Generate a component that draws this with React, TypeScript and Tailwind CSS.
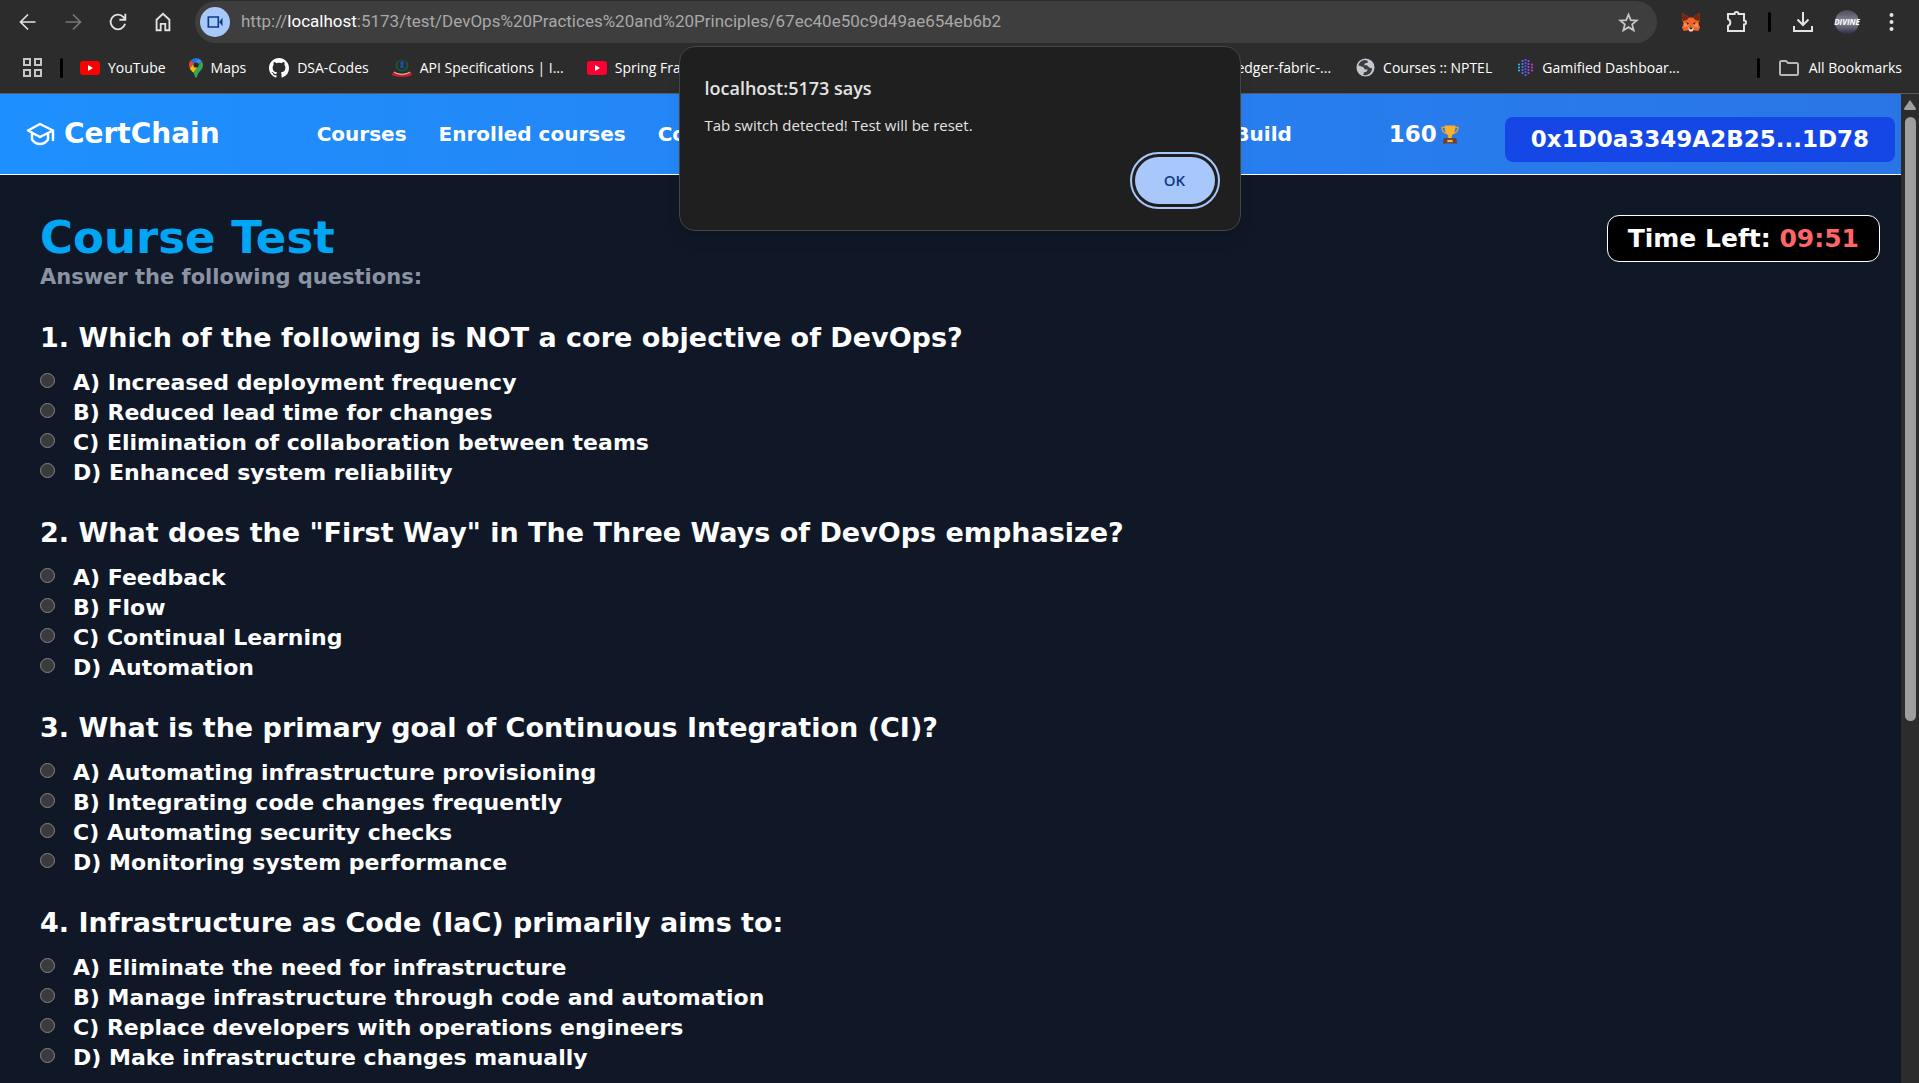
import type { ReactNode } from 'react';

const questions = [
  {
    title: 'Which of the following is NOT a core objective of DevOps?',
    options: [
      'Increased deployment frequency',
      'Reduced lead time for changes',
      'Elimination of collaboration between teams',
      'Enhanced system reliability',
    ],
  },
  {
    title: 'What does the "First Way" in The Three Ways of DevOps emphasize?',
    options: ['Feedback', 'Flow', 'Continual Learning', 'Automation'],
  },
  {
    title: 'What is the primary goal of Continuous Integration (CI)?',
    options: [
      'Automating infrastructure provisioning',
      'Integrating code changes frequently',
      'Automating security checks',
      'Monitoring system performance',
    ],
  },
  {
    title: 'Infrastructure as Code (IaC) primarily aims to:',
    options: [
      'Eliminate the need for infrastructure',
      'Manage infrastructure through code and automation',
      'Replace developers with operations engineers',
      'Make infrastructure changes manually',
    ],
  },
];

const letters = ['A', 'B', 'C', 'D'];

function IconButton({ label, className, children }: { label: string; className?: string; children: ReactNode }) {
  return (
    <button type="button" aria-label={label} className={`flex shrink-0 items-center justify-center ${className ?? ''}`}>
      {children}
    </button>
  );
}

function Stroke({ size, width = 2, children }: { size: number; width?: number; children: ReactNode }) {
  return (
    <svg width={size} height={size} viewBox="0 0 24 24" fill="none" stroke="currentColor" strokeWidth={width}>
      {children}
    </svg>
  );
}

function FoxIcon() {
  return (
    <svg width="20" height="20" viewBox="0 0 22 22">
      <path d="M2 1 9 6h4l7-5 1 7-2 5 2 4-2 4-5-1-2 2h-2l-2-2-5 1-2-4 2-4-2-5z" fill="#f0642a" />
      <path d="M2 1 9 6 6 9 2 10 1 7zM20 1l-7 5 3 3 4 1 1-3z" fill="#7a2410" />
      <path d="M3 12l6 1-1 3-5 1zM19 12l-6 1 1 3 5 1z" fill="#ff8a4a" />
      <path d="M6 11l3 2-2 1zM16 11l-3 2 2 1z" fill="#3b1d18" />
      <path d="M8 17h6l-1 4H9z" fill="#e8dcd2" />
      <path d="M9 17h4l-1 2h-2z" fill="#2b1a16" />
    </svg>
  );
}

function YouTubeIcon({ color }: { color: string }) {
  return (
    <svg width="20" height="14" viewBox="0 0 20 14">
      <rect width="20" height="14" rx="3" fill={color} />
      <path d="M8 4l5 3-5 3z" fill="#fff" />
    </svg>
  );
}

function MapsIcon() {
  return (
    <svg width="14" height="20" viewBox="0 0 14 20">
      <path d="M7 0a7 7 0 0 0-5.4 2.5L4.8 5.2 9.2.4A7 7 0 0 0 7 0z" fill="#1a73e8" />
      <path d="M9.2.4 4.8 5.2 7 9.5 12.6 2.9A7 7 0 0 0 9.2.4z" fill="#4285f4" />
      <path d="M1.6 2.5A7 7 0 0 0 .8 10.2L5 5.3z" fill="#ea4335" />
      <path d="M.8 10.2C1.5 11.7 3 13.2 4.3 14.8L9 8.9 5 5.3z" fill="#fbbc04" />
      <path d="M12.6 2.9 4.3 14.8C5.7 16.6 6.2 20 7 20s1.2-3.2 2.6-5.1C11.4 12.5 14 10.6 14 7a7 7 0 0 0-1.4-4.1z" fill="#34a853" />
      <circle cx="7" cy="7" r="2.6" fill="#2c2c2c" />
    </svg>
  );
}

function GithubIcon() {
  return (
    <svg width="20" height="20" viewBox="0 0 16 16" fill="#fff">
      <path d="M8 0C3.58 0 0 3.58 0 8c0 3.54 2.29 6.53 5.47 7.59.4.07.55-.17.55-.38 0-.19-.01-.82-.01-1.49-2.01.37-2.53-.49-2.69-.94-.09-.23-.48-.94-.82-1.13-.28-.15-.68-.52-.01-.53.63-.01 1.08.58 1.23.82.72 1.21 1.87.87 2.33.66.07-.52.28-.87.51-1.07-1.78-.2-3.64-.89-3.64-3.95 0-.87.31-1.59.82-2.15-.08-.2-.36-1.02.08-2.12 0 0 .67-.21 2.2.82.64-.18 1.32-.27 2-.27s1.36.09 2 .27c1.53-1.04 2.2-.82 2.2-.82.44 1.1.16 1.92.08 2.12.51.56.82 1.27.82 2.15 0 3.07-1.87 3.75-3.65 3.95.29.25.54.73.54 1.48 0 1.07-.01 1.93-.01 2.2 0 .21.15.46.55.38A8.01 8.01 0 0 0 16 8c0-4.42-3.58-8-8-8z" />
    </svg>
  );
}

function ApiIcon() {
  return (
    <svg width="20" height="18" viewBox="0 0 20 18" fill="none">
      <path d="M6 2.5a5.5 5.5 0 1 0 8 0" stroke="#12603a" strokeWidth="1.6" />
      <path d="M6 2.5q4-3 8 0" stroke="#12603a" strokeWidth="1" strokeDasharray="2 1" />
      <circle cx="10" cy="4" r="2" fill="#1a4fa3" />
      <path d="M9 5h2l1 4H8z" fill="#1a4fa3" />
      <path d="M1 13c4 2.5 14 2.5 18 0l1 3c-4 2.5-16 2.5-20 0z" fill="#c8202f" />
      <path d="M2 13c5 3 11 3 16 0" stroke="#f1d5d5" />
    </svg>
  );
}

function GlobeIcon() {
  return (
    <svg width="19" height="19" viewBox="0 0 20 20">
      <circle cx="10" cy="10" r="9.5" fill="#c4c7cc" />
      <path d="M9 2c-4 .5-6 3-6.5 6l5 1.5 2 2.5h3l-1.5 2.5-2.5.5-1 3c5 .8 9-2 9.5-7l-3-1-2.5-2.5H8.5l1-2 3-.5-.5-2.5z" fill="#3a3d42" />
    </svg>
  );
}

function DotGlobeIcon() {
  return (
    <svg width="17" height="17" viewBox="0 0 17 17" fill="none" strokeWidth="2.2" strokeLinecap="round" strokeDasharray="0 3">
      <path d="M5.5 2v14" stroke="#4f7bff" />
      <path d="M8.5 1v15.5" stroke="#5a5cff" />
      <path d="M11.5 2v14" stroke="#9b4cf6" />
      <path d="M2 5.500v8" stroke="#24c3e8" />
      <path d="M15 5.500v8" stroke="#c03ad8" />
    </svg>
  );
}

function Bookmark({ icon, children }: { icon: ReactNode; children: ReactNode }) {
  return (
    <li>
      <a href="#" className="flex items-center gap-2 whitespace-nowrap">
        {icon}
        <span>{children}</span>
      </a>
    </li>
  );
}

function BrowserBar() {
  return (
    <header className="border-b border-[#5a5a5a] bg-[#2c2c2c] font-['Open_Sans',sans-serif] text-[#e3e3e3]">
      <div className="flex h-11 items-center pr-4 pl-[14px]">
        <div className="flex items-center gap-[17px]">
          <IconButton label="Back" className="size-7">
            <Stroke size={20}><path d="M21 12H4M12 3l-9 9 9 9" /></Stroke>
          </IconButton>
          <IconButton label="Forward" className="size-7 text-[#777]">
            <Stroke size={20}><path d="M3 12h17M12 3l9 9-9 9" /></Stroke>
          </IconButton>
          <IconButton label="Reload" className="size-7">
            <Stroke size={22}><path d="M19.7 14a8 8 0 1 1-2-7.6L20 9M20 3v6.5h-6.5" /></Stroke>
          </IconButton>
          <IconButton label="Home" className="size-7">
            <Stroke size={22}><path d="M5 21V9.5l7-6.5 7 6.5V21h-4.500v-7h-5v7z" /></Stroke>
          </IconButton>
        </div>
        <div className="ml-[18px] flex h-[42px] min-w-0 flex-1 items-center rounded-full bg-[#3e3e3e] px-[5px]">
          <IconButton label="Camera in use" className="size-[30px] rounded-full bg-[#a8c7fa] text-[#0b3a86]">
            <Stroke size={20}><path d="M4 6h12v12H4z" /><path d="M17 12l4-5v10z" fill="currentColor" stroke="none" /></Stroke>
          </IconButton>
          <div aria-label="Address" className="ml-[11px] flex-1 truncate font-[Roboto,sans-serif] text-[17px] text-[#a8a8a8]">
            http://<span className="text-white">localhost</span>:5173/test/DevOps%20Practices%20and%20Principles/67ec40e50c9d49ae654eb6b2
          </div>
          <IconButton label="Bookmark this tab" className="mr-3 size-6 text-[#c7c7c7]">
            <Stroke size={21}><path d="M12 3l2.6 6.3 6.8.5-5.2 4.4 1.7 6.7L12 17.3l-5.9 3.6 1.7-6.7L2.6 9.8l6.8-.5z" /></Stroke>
          </IconButton>
        </div>
        <div className="ml-[22px] flex items-center">
          <IconButton label="Wallet extension" className="size-6"><FoxIcon /></IconButton>
          <IconButton label="Extensions" className="ml-[22px] size-6">
            <Stroke size={24}><path d="M3 4h6.5a2 2 0 0 1 4 0H19v6.5a2 2 0 0 1 0 4V21H3v-5a3.8 3.8 0 0 0 0-7z" /></Stroke>
          </IconButton>
          <span className="ml-[19px] h-5 w-[3px] rounded-full bg-black" />
          <IconButton label="Downloads" className="ml-5 size-6">
            <Stroke size={24}><path d="M12 2v13M6.5 9.5 12 15l5.5-5.5M3 16v5h18v-5" /></Stroke>
          </IconButton>
          <IconButton label="Profile" className="ml-5 size-6 rounded-full bg-linear-to-b from-[#4a4a58] via-[#8c8c9c] to-[#2e2e44] text-[8px] leading-none font-bold text-white italic">
            DIVINE
          </IconButton>
          <IconButton label="Menu" className="ml-5 size-6">
            <svg width="5" height="18" viewBox="0 0 5 18" fill="currentColor">
              <circle cx="2.5" cy="2" r="2" /><circle cx="2.5" cy="9" r="2" /><circle cx="2.5" cy="16" r="2" />
            </svg>
          </IconButton>
        </div>
      </div>
      <div className="flex h-[49px] items-center pr-[17px] pb-[2px] pl-[22px] text-[14px] text-white">
        <IconButton label="Apps" className="size-5">
          <svg width="19" height="19" viewBox="0 0 19 19" fill="none" stroke="#c7c7c7" strokeWidth="2">
            <path d="M1 1h6v6H1zM12 1h6v6h-6zM1 12h6v6H1zM12 12h6v6h-6z" />
          </svg>
        </IconButton>
        <span className="ml-[18px] h-5 w-[3px] rounded-full bg-black" />
        <ul className="ml-[17px] flex items-center gap-[23px]">
          <Bookmark icon={<YouTubeIcon color="#ff0000" />}>YouTube</Bookmark>
          <Bookmark icon={<MapsIcon />}>Maps</Bookmark>
          <Bookmark icon={<GithubIcon />}>DSA-Codes</Bookmark>
          <Bookmark icon={<ApiIcon />}>API Specifications | I...</Bookmark>
          <Bookmark icon={<YouTubeIcon color="#ff0033" />}>Spring Framework</Bookmark>
        </ul>
        <ul className="mr-[77px] ml-auto flex items-center gap-[25px]">
          <Bookmark icon={<GithubIcon />}>hyperledger-fabric-...</Bookmark>
          <Bookmark icon={<GlobeIcon />}>Courses :: NPTEL</Bookmark>
          <Bookmark icon={<DotGlobeIcon />}>Gamified Dashboar...</Bookmark>
        </ul>
        <span className="h-5 w-[3px] rounded-full bg-black" />
        <button type="button" className="ml-[19px] flex items-center gap-[10px] whitespace-nowrap">
          <svg width="20" height="16" viewBox="0 0 20 16" fill="none" stroke="#b8b8b8" strokeWidth="2">
            <path d="M1 2.5Q1 1 2.5 1H7l2 2h8.5Q19 3 19 4.500v9q0 1.500-1.500 1.500h-15Q1 15 1 13.500z" />
          </svg>
          All Bookmarks
        </button>
      </div>
    </header>
  );
}

function NavBar() {
  return (
    <nav className="flex h-[81px] items-center border-b border-white bg-linear-to-r from-[#1e90ff] to-[#2a75e6] pr-[6px] pl-[26px] whitespace-nowrap">
      <a href="#" className="flex items-center gap-[9px] text-[28px]">
        <svg width="29" height="24" viewBox="0 0 29 24" fill="none" stroke="currentColor" strokeWidth="2.5" strokeLinejoin="round" strokeLinecap="round">
          <path d="M14 2 2 8.5 14 15l13-6.5zM27 8.5V18M6 11.5v6c4 6 12 6 16 0v-6" />
        </svg>
        CertChain
      </a>
      <div className="mr-[97px] ml-[97px] flex flex-1 items-center gap-8 text-[20px]">
        <a href="#">Courses</a>
        <a href="#">Enrolled courses</a>
        <a href="#">Co</a>
        <a href="#" className="ml-auto">Build</a>
      </div>
      <div className="flex items-center gap-1 text-[23px]">
        160
        <svg width="18" height="21" viewBox="0 0 20 22" fill="none">
          <path d="M5 3H1q0 6 6 7M15 3h4q0 6-6 7" stroke="#f59a23" strokeWidth="1.5" />
          <path d="M4 1h12q0 9-4 11v3H8v-3Q4 10 4 1z" fill="#fdb02c" />
          <path d="M3 15h14l1 6H2z" fill="#6b4136" />
          <path d="M7 17h6v2.5H7z" fill="#f7b23b" />
        </svg>
      </div>
      <button type="button" className="mt-[10px] ml-[46px] h-[45px] rounded-lg bg-[#1447e6] px-[26px] text-[23px]">
        0x1D0a3349A2B25...1D78
      </button>
    </nav>
  );
}

function Dialog() {
  return (
    <div
      role="alertdialog"
      aria-labelledby="dialog-title"
      aria-describedby="dialog-text"
      className="absolute top-[46px] left-1/2 flex h-[185px] w-[562px] -translate-x-1/2 flex-col rounded-2xl border border-[#454545] bg-[#1f1f1f] px-[25px] pt-[29px] font-['Open_Sans',sans-serif] text-[#e3e3e3] shadow-lg"
    >
      <h2 id="dialog-title" className="text-[18px] leading-6 font-semibold">localhost:5173 says</h2>
      <p id="dialog-text" className="mt-[15px] text-[15px] leading-5">Tab switch detected! Test will be reset.</p>
      <button
        type="button"
        className="mt-[22px] h-[47px] w-20 self-end rounded-full bg-[#a8c7fa] text-[15px] font-semibold text-[#0b3a86] outline-2 outline-offset-3 outline-[#a8c7fa]"
      >
        OK
      </button>
    </div>
  );
}

function Question({ index, title, options }: { index: number; title: string; options: string[] }) {
  return (
    <fieldset>
      <legend className="mb-3 text-[27px] leading-[35px]">{index}. {title}</legend>
      {options.map((option, i) => (
        <label key={option} className="flex h-[30px] w-fit items-center gap-[18px] text-[22px]">
          <input
            type="radio"
            name={`question-${index}`}
            className="mb-1 size-[15px] appearance-none rounded-full border border-[#858585] bg-[#3b3b3b] checked:bg-[#a8c7fa]"
          />
          {letters[i]}) {option}
        </label>
      ))}
    </fieldset>
  );
}

export default function App() {
  return (
    <div className="relative flex min-h-screen flex-col bg-[#101828]">
      <BrowserBar />
      <div className="flex flex-1">
        <div className="flex min-w-0 flex-1 flex-col font-['DejaVu_Sans',sans-serif] font-bold text-white">
          <NavBar />
          <main className="pt-10 pr-[21px] pb-3 pl-10">
            <div className="flex items-start justify-between">
              <div>
                <h1 className="text-[45px] leading-[45px] text-[#00a6f4]">Course Test</h1>
                <p className="text-[21px] leading-[34px] text-[#8b93a3]">Answer the following questions:</p>
              </div>
              <div className="rounded-xl border border-white bg-black px-[20px] text-[25px] leading-[45px]">
                Time Left: <span className="text-[#ff6467]">09:51</span>
              </div>
            </div>
            <form className="mt-[26px] flex flex-col gap-7">
              {questions.map((q, i) => (
                <Question key={q.title} index={i + 1} title={q.title} options={q.options} />
              ))}
            </form>
          </main>
        </div>
        <div className="flex w-[18px] shrink-0 flex-col items-center bg-[#2c2c2c]" aria-hidden="true">
          <svg width="12" height="10" viewBox="0 0 12 10" className="mt-[6px] mb-[7px] shrink-0">
            <path d="M6 0l6 8.5q0 1.5-1 1.5H1Q0 10 0 8.5z" fill="#9f9f9f" />
          </svg>
          <div className="h-[61%] w-[11px] rounded-full bg-[#9f9f9f]" />
        </div>
      </div>
      <Dialog />
    </div>
  );
}
